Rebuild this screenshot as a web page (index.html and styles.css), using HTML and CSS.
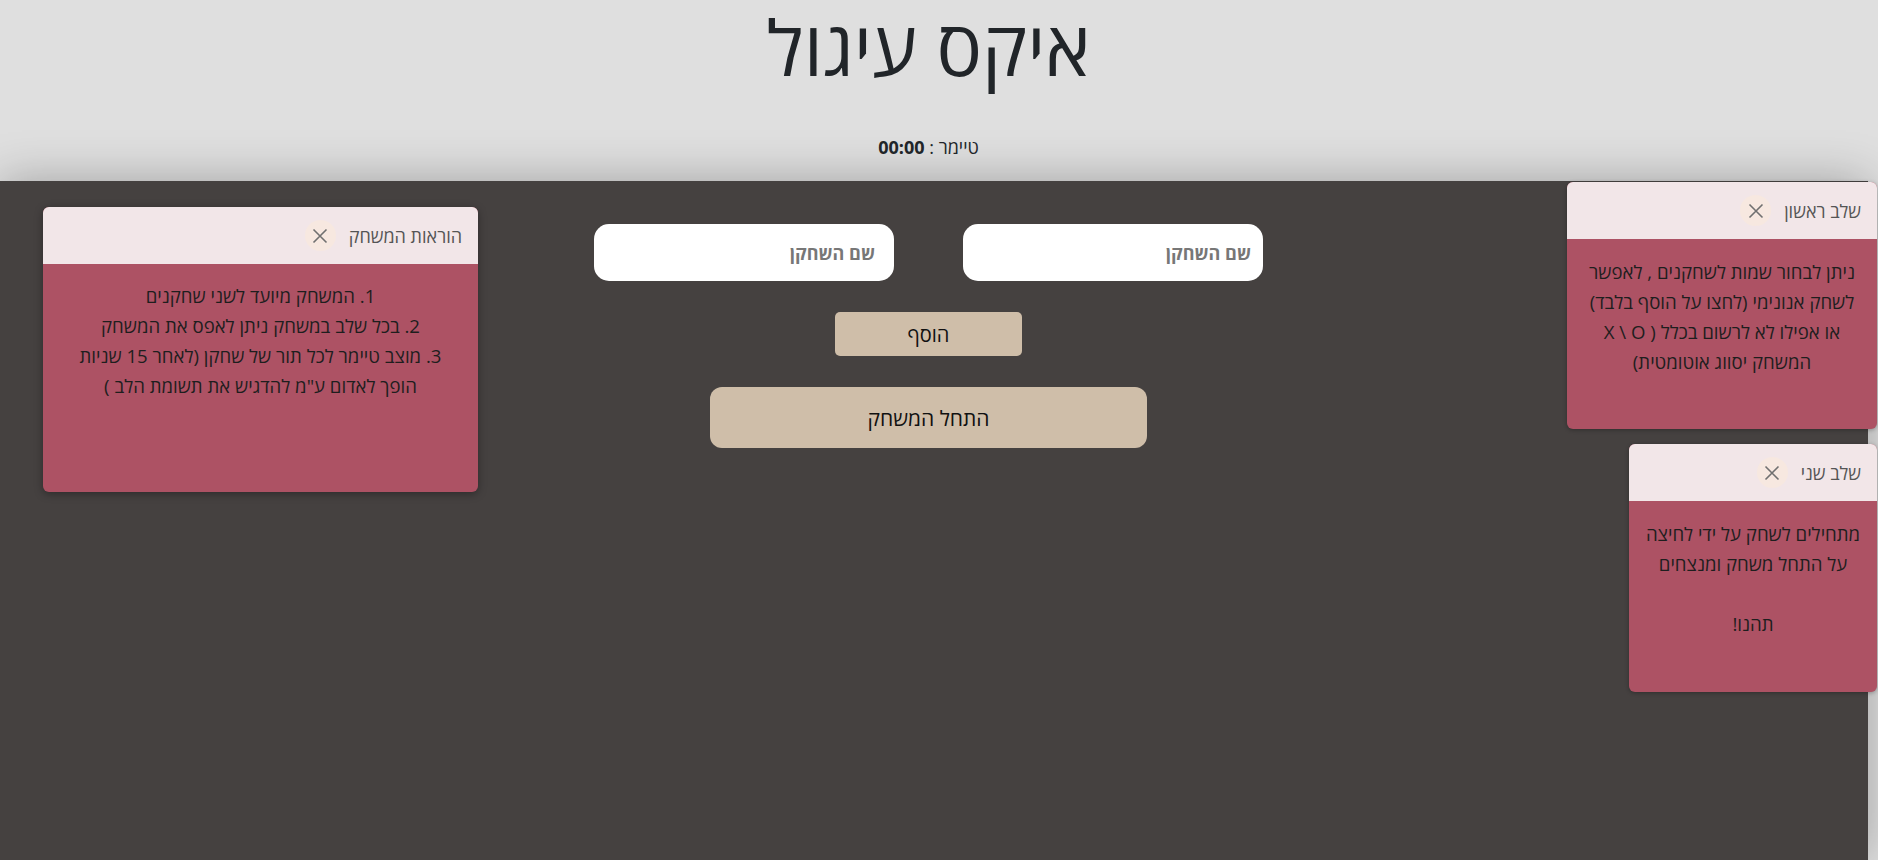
FILE: index.html
```html
<!DOCTYPE html>
<html lang="he" dir="rtl">
<head>
<meta charset="utf-8">
<title>איקס עיגול</title>
<link rel="stylesheet" href="styles.css">
</head>
<body>
<header class="top">
  <h1 class="title">איקס עיגול</h1>
  <div class="timer">טיימר : <b>00:00</b></div>
</header>

<main class="board">
  <section class="card">
    <div class="card-head">
      <span class="card-title">הוראות המשחק</span>
      <button class="close" aria-label="סגור"><svg viewBox="0 0 16 16" width="16" height="16"><path d="M1.5 1.5L14.5 14.5M14.5 1.5L1.5 14.5" stroke="#707070" stroke-width="1.6" fill="none"/></svg></button>
    </div>
    <div class="card-body">
      <p>1. המשחק מיועד לשני שחקנים</p>
      <p>2. בכל שלב במשחק ניתן לאפס את המשחק</p>
      <p>3. מוצב טיימר לכל תור של שחקן (לאחר 15 שניות<br>הופך לאדום ע"מ להדגיש את תשומת הלב )</p>
    </div>
  </section>

  <section class="center">
    <div class="inputs">
      <input class="name name-a" type="text" placeholder="שם השחקן">
      <input class="name name-b" type="text" placeholder="שם השחקן">
    </div>
    <button class="btn add">הוסף</button>
    <button class="btn start">התחל המשחק</button>
  </section>
</main>

<div class="toasts">
  <section class="toast toast-one">
    <div class="card-head">
      <span class="card-title">שלב ראשון</span>
      <button class="close" aria-label="סגור"><svg viewBox="0 0 16 16" width="16" height="16"><path d="M1.5 1.5L14.5 14.5M14.5 1.5L1.5 14.5" stroke="#707070" stroke-width="1.6" fill="none"/></svg></button>
    </div>
    <div class="toast-body">
      ניתן לבחור שמות לשחקנים , לאפשר<br>
      לשחק אנונימי (לחצו על הוסף בלבד)<br>
      או אפילו לא לרשום בכלל <bdo dir="ltr">X \ O )</bdo><br>
      המשחק יסווג אוטומטית)
    </div>
  </section>
  <section class="toast toast-two">
    <div class="card-head">
      <span class="card-title">שלב שני</span>
      <button class="close" aria-label="סגור"><svg viewBox="0 0 16 16" width="16" height="16"><path d="M1.5 1.5L14.5 14.5M14.5 1.5L1.5 14.5" stroke="#707070" stroke-width="1.6" fill="none"/></svg></button>
    </div>
    <div class="toast-body">
      מתחילים לשחק על ידי לחיצה<br>
      על התחל משחק ומנצחים<br>
      <br>
      תהנו!
    </div>
  </section>
</div>
</body>
</html>
```

FILE: styles.css
```css
html, body {
  margin: 0;
  padding: 0;
}
body {
  background: #dfdfdf;
  font-family: "Open Sans", "DejaVu Sans", sans-serif;
  color: #212529;
  height: 860px;
  overflow: hidden;
  position: relative;
}
.top {
  height: 181px;
  text-align: center;
  padding-right: 21px;
  box-sizing: border-box;
}
.title {
  margin: 0;
  padding-top: 0;
  font-size: 76px;
  font-weight: 400;
  line-height: 94px;
  color: #212529;
}
.timer {
  margin-top: 41px;
  font-size: 18px;
  line-height: 24px;
}
.timer b {
  font-weight: 700;
}
.board {
  width: 1868px;
  margin-left: 0;
  margin-right: auto;
  height: 679px;
  box-sizing: border-box;
  background: #454140;
  box-shadow: 0 0 45px rgba(0, 0, 0, 0.28);
  display: grid;
  grid-template-columns: 1fr auto 1fr;
  padding: 26px 54px 0 43px;
  align-items: start;
  direction: ltr;
}
.card {
  direction: rtl;
  grid-column: 1;
  justify-self: start;
  width: 435px;
  height: 285px;
  border-radius: 6px;
  overflow: hidden;
  background: #ad5264;
  box-shadow: 0 2px 8px rgba(0, 0, 0, 0.35);
  display: flex;
  flex-direction: column;
}
.card-head {
  height: 57px;
  flex: none;
  background: #f2e6e8;
  display: flex;
  align-items: center;
  gap: 13px;
  padding: 0 16px;
  box-sizing: border-box;
}
.card-title {
  font-size: 18px;
  color: #555;
}
.close {
  width: 31px;
  height: 31px;
  border-radius: 50%;
  border: 0;
  padding: 0;
  background: #f7e8e0;
  display: flex;
  align-items: center;
  justify-content: center;
}
.card-body {
  padding: 17px 14px;
  text-align: center;
  font-size: 18.6px;
  line-height: 30px;
  color: #1e1e1e;
}
.card-body p {
  margin: 0;
}
.center {
  grid-column: 2;
  direction: rtl;
  display: flex;
  flex-direction: column;
  align-items: center;
  margin-top: 17px;
}
.inputs {
  display: flex;
  gap: 69px;
}
.name {
  width: 300px;
  height: 57px;
  box-sizing: border-box;
  border: 0;
  border-radius: 15px;
  background: #fff;
  font-family: inherit;
  font-size: 18px;
  font-weight: 700;
  outline: none;
}
.name::placeholder {
  color: #777;
}
.name-a {
  padding: 0 12px;
}
.name-b {
  padding: 0 19px;
}
.btn {
  border: 0;
  background: #cfbea9;
  font-family: inherit;
  color: #111;
}
.add {
  margin-top: 31px;
  width: 187px;
  height: 44px;
  border-radius: 5px;
  font-size: 20px;
}
.start {
  margin-top: 31px;
  width: 437px;
  height: 61px;
  border-radius: 12px;
  font-size: 21px;
}
.toasts {
  position: absolute;
  top: 182px;
  right: 1px;
  display: flex;
  flex-direction: column;
  align-items: flex-start;
  gap: 15px;
}
.toast {
  background: #ad5264;
  border-radius: 6px;
  overflow: hidden;
  box-shadow: 0 1px 4px rgba(0, 0, 0, 0.3);
  display: flex;
  flex-direction: column;
}
.toast-one {
  width: 310px;
  height: 247px;
}
.toast-two {
  width: 248px;
  height: 248px;
}
.toast-body {
  padding: 18px 10px;
  text-align: center;
  font-size: 18.6px;
  line-height: 30px;
  color: #1e1e1e;
}
```
